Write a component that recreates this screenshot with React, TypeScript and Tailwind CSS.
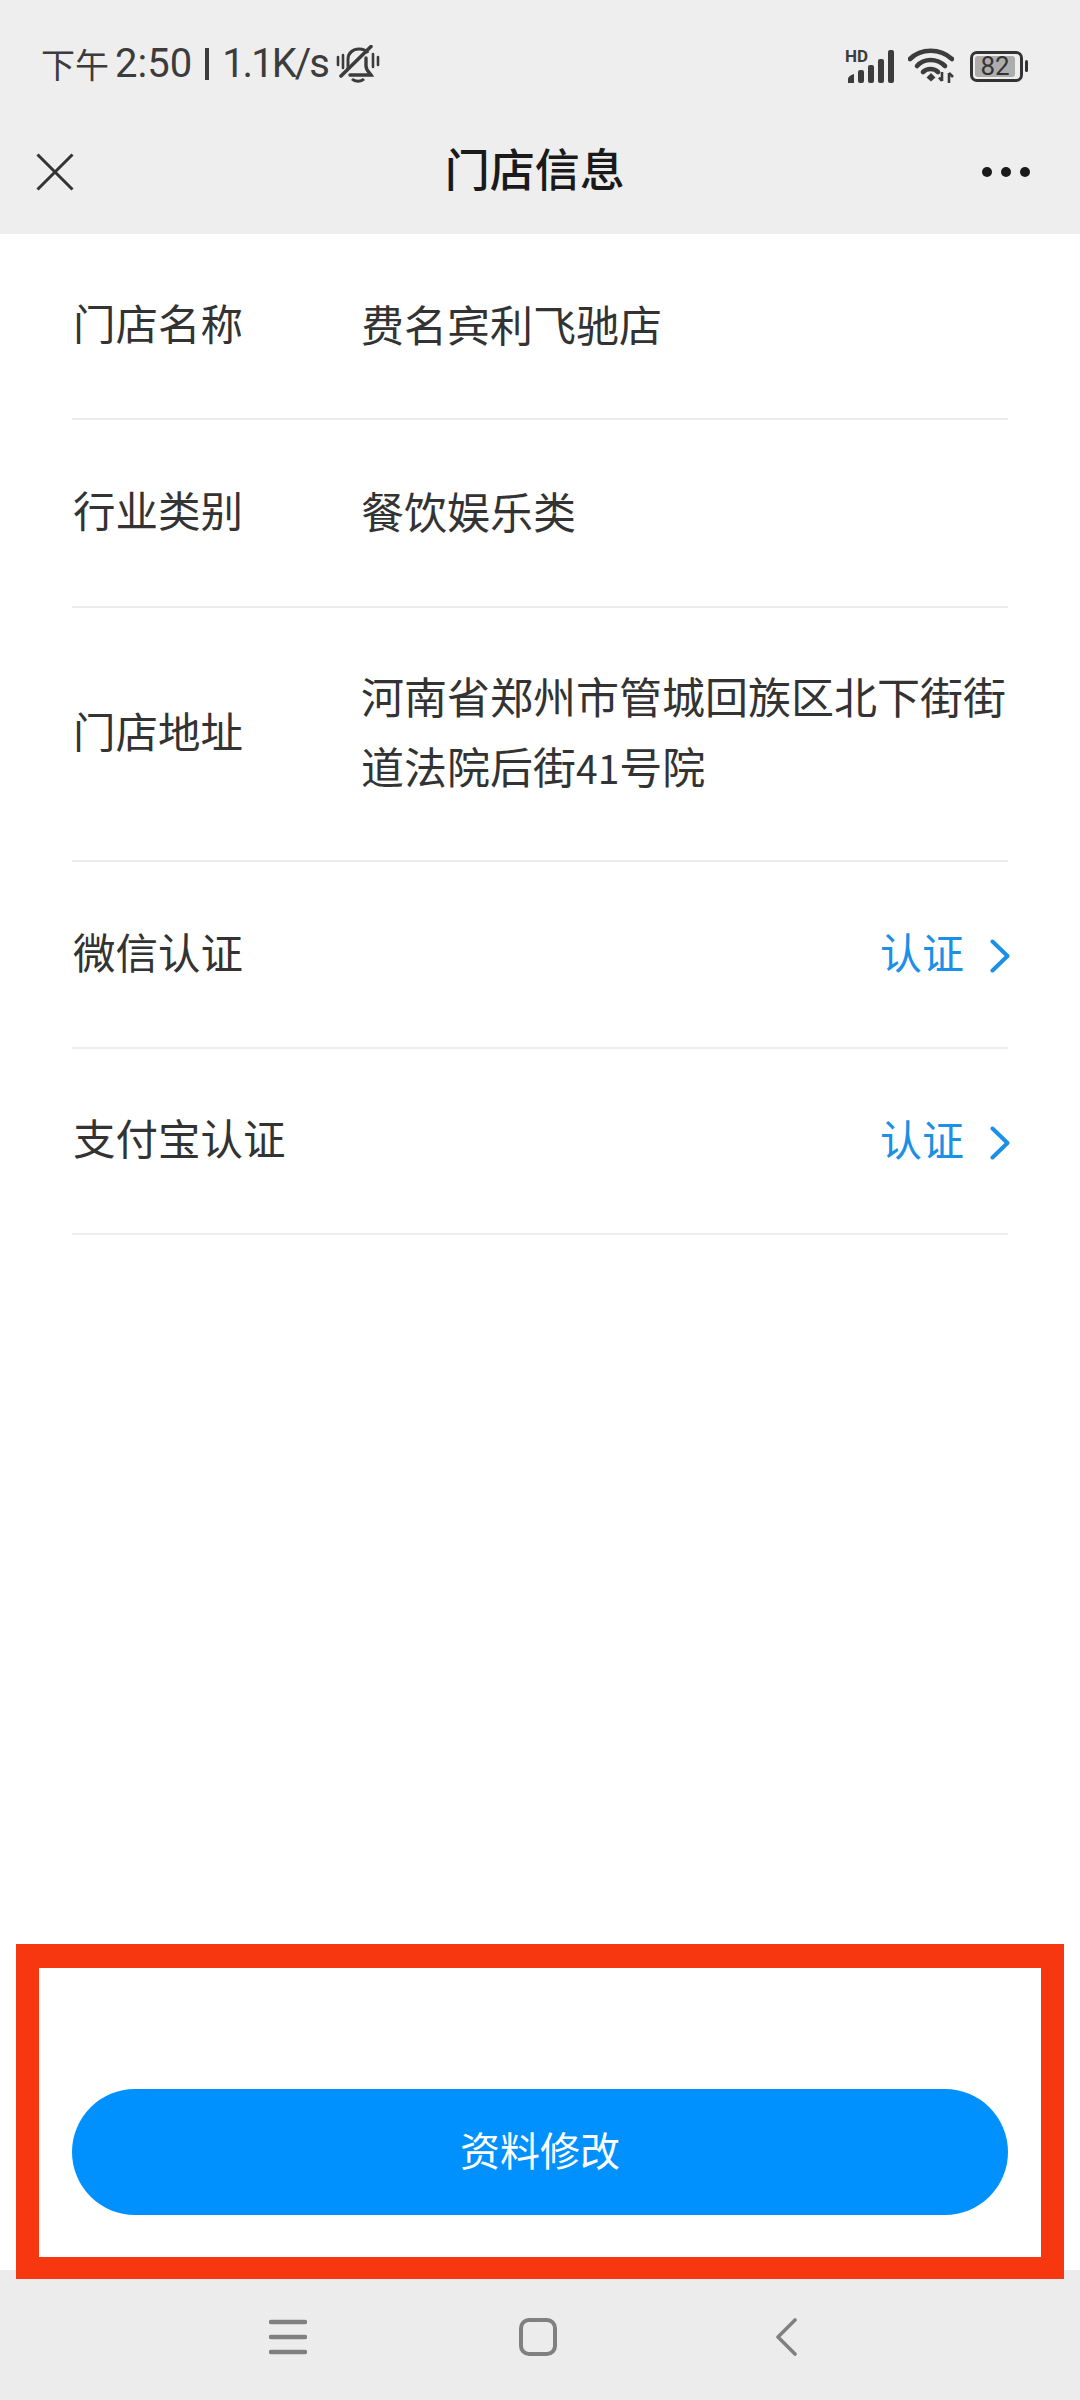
import React from "react";

const FONT = "font-['Noto_Sans_CJK_SC','Noto_Sans',sans-serif]";

const Chevron = () => (
  <svg width="20" height="34" viewBox="0 0 20 34" fill="none" className="ml-[26px] mt-[10px]">
    <path d="M2.5 2.5 L17.5 17 L2.5 31.5" stroke="#1c8fe6" strokeWidth="4" strokeLinecap="round" strokeLinejoin="round" />
  </svg>
);

const MuteBell = () => (
  <svg width="44" height="38" viewBox="0 0 44 38" fill="none" stroke="#3c3c3c" strokeWidth="3" className="ml-[8px]">
    <path d="M12 24 V14 C12 8 17 4 23 4 C27 4 30 5 32 8" />
    <path d="M30 13 V21 C30 25 33 27 35 30 H14" strokeLinecap="round" strokeWidth="3.4" />
    <path d="M5 31 L35 1.5" strokeLinecap="round" strokeWidth="3.6" />
    <path d="M16 34 C19 37 25 37 28 34" strokeWidth="3" />
    <path d="M2 12 V20 M7 10 V23 M37 9 V22 M42 12 V20" strokeLinecap="round" strokeWidth="2.6" />
  </svg>
);

const SignalIcon = () => (
  <svg width="50" height="34" viewBox="0 0 50 34" fill="#3c3c3c" className="overflow-visible">
    <text x="0" y="13" fontSize="17" fontWeight="700" fontFamily="Roboto, sans-serif">HD</text>
    <path d="M3 34 V30 Q3 27 9 25 V34 Z" />
    <rect x="13" y="21" width="6" height="13" rx="2" />
    <rect x="23" y="16" width="6" height="18" rx="2" />
    <rect x="33" y="10" width="6" height="24" rx="2" />
    <rect x="43" y="1" width="6" height="33" rx="2" />
  </svg>
);

const WifiIcon = () => (
  <svg width="46" height="36" viewBox="0 0 46 36" fill="none" stroke="#3c3c3c" strokeWidth="4.6">
    <path d="M2 11 C13 0 32 0 44 11" strokeLinecap="round" />
    <path d="M9 18 C16 10 29 10 37 18" strokeLinecap="round" />
    <path d="M15 24 C19 20 26 20 30 24" strokeLinecap="round" />
    <path d="M23 25 L27.5 29.5 L23 33.5 L18.5 29.5 Z" fill="#3c3c3c" stroke="none" />
    <path d="M34 24 V33 M34 33 L31 29.5 M41 35 V25 M41 25 L45 29" strokeWidth="2.6" />
  </svg>
);

const Battery = () => (
  <div className="flex items-center ml-[16px]">
    <div className="w-[53px] h-[31px] rounded-[7px] border-[3px] border-[#333333] p-[2px] flex">
      <div className="w-[40px] h-full rounded-[3px] bg-[#adadad] flex items-center justify-center text-[26px] leading-none text-[#333333] font-['Roboto',sans-serif]">
        82
      </div>
    </div>
    <div className="w-[3px] h-[12px] ml-[2px] rounded-sm bg-[#333333]" />
  </div>
);

const StatusBar = () => (
  <div className="h-[126px] flex items-start justify-between pl-[41px] pr-[52px] pt-[46px]">
    <div className="flex items-center h-[36px] text-[#3c3c3c]">
      <span className="text-[34px] leading-none">下午</span>
      <span className="ml-[6px] text-[40px] leading-none font-['Roboto',sans-serif]">2:50</span>
      <span className="ml-[13px] w-[4px] h-[32px] bg-[#3c3c3c]" />
      <span className="ml-[13px] text-[40px] leading-none tracking-[-2px] font-['Roboto',sans-serif]">1.1K/s</span>
      <MuteBell />
    </div>
    <div className="flex items-center h-[36px] mt-[2px]">
      <SignalIcon />
      <div className="ml-[13px]">
        <WifiIcon />
      </div>
      <Battery />
    </div>
  </div>
);

const NavBar = () => (
  <div className="h-[108px] flex items-center justify-between pl-[36px] pr-[50px] pb-[16px]">
    <svg width="38" height="38" viewBox="0 0 38 38" stroke="#333333" strokeWidth="3">
      <path d="M1.5 1.5 L36.5 36.5 M36.5 1.5 L1.5 36.5" />
    </svg>
    <div className="text-[45px] leading-none font-medium text-[#1a1a1a] mt-[-10px] ml-[13px]">门店信息</div>
    <div className="flex gap-[9.5px]">
      <span className="w-[9.5px] h-[9.5px] rounded-full bg-[#1a1a1a]" />
      <span className="w-[9.5px] h-[9.5px] rounded-full bg-[#1a1a1a]" />
      <span className="w-[9.5px] h-[9.5px] rounded-full bg-[#1a1a1a]" />
    </div>
  </div>
);

const Row = ({ label, value, auth, height }: { label: string; value?: React.ReactNode; auth?: boolean; height: string }) => (
  <div className={`${height} flex items-center border-b-2 border-[#ececec] text-[#333333] pb-[7px]`}>
    <div className="w-[289px] shrink-0 pl-[1px] text-[42.5px] leading-none">{label}</div>
    {value && <div className="text-[43px] leading-[70px]">{value}</div>}
    {auth && (
      <div className="ml-auto flex items-center text-[42px] leading-none text-[#1c8fe6] mr-[-2px]">
        认证
        <Chevron />
      </div>
    )}
  </div>
);

const NavKeys = () => (
  <div className="h-[130px] bg-[#ececec] flex items-center justify-center">
    <div className="flex items-center gap-[212px] ml-[-14px] mt-[3px]">
      <svg width="38" height="36" viewBox="0 0 38 36" stroke="#808080" strokeWidth="4.5" strokeLinecap="round">
        <path d="M2 3 H36 M2 18 H36 M2 33 H36" />
      </svg>
      <svg width="38" height="38" viewBox="0 0 38 38" fill="none" stroke="#808080" strokeWidth="4">
        <rect x="2" y="2" width="34" height="34" rx="8" />
      </svg>
      <svg width="22" height="38" viewBox="0 0 22 38" fill="none" stroke="#808080" strokeWidth="3.6" strokeLinecap="round" strokeLinejoin="round" className="ml-[6px]">
        <path d="M20 2 L3 19 L20 36" />
      </svg>
    </div>
  </div>
);

export default function App() {
  return (
    <div className={`${FONT} relative w-[1080px] h-[2400px] bg-white flex flex-col`}>
      <div className="bg-[#eeeeee] h-[234px]">
        <StatusBar />
        <NavBar />
      </div>

      <div className="flex-1 flex flex-col px-[72px]">
        <Row height="h-[186px]" label="门店名称" value="费名宾利飞驰店" />
        <Row height="h-[188px]" label="行业类别" value="餐饮娱乐类" />
        <Row
          height="h-[254px]"
          label="门店地址"
          value={
            <>
              河南省郑州市管城回族区北下街街道法院后街<span className="text-[39px]">41</span>号院
            </>
          }
        />
        <Row height="h-[187px]" label="微信认证" auth />
        <Row height="h-[186px]" label="支付宝认证" auth />

        <button className="mt-auto mb-[55px] h-[126px] rounded-full bg-[#0091ff] text-white text-[40px] leading-none pb-[6px]">
          资料修改
        </button>
      </div>

      <NavKeys />

      {/* red annotation frame */}
      <div className="absolute left-[16px] top-[1944px] w-[1048px] h-[335px] border-[#f6370f] border-t-[24px] border-b-[22px] border-x-[23px]" />
    </div>
  );
}
